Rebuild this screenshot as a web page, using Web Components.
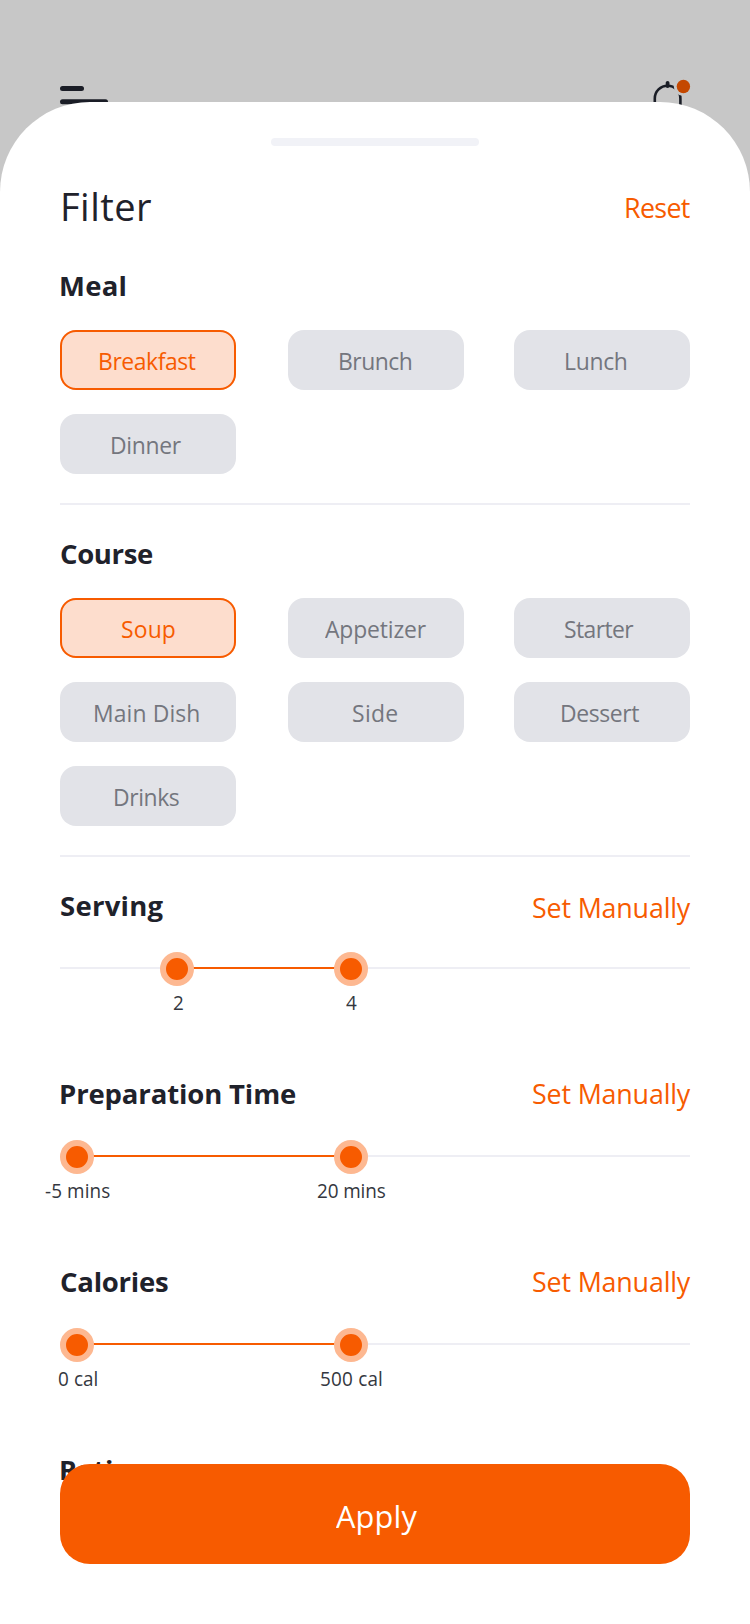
<!DOCTYPE html>
<html lang="en">
<head>
<meta charset="utf-8">
<title>Filter</title>
<style>
html,body{margin:0;padding:0}
body{font-family:"Open Sans","Noto Sans",sans-serif;color:#1f222b;background:#c7c7c7;width:750px;height:1624px;overflow:hidden}
</style>
</head>
<body>
<filter-screen></filter-screen>
<script>
const define = (name, html, setup) => {
  const t = document.createElement('template');
  t.innerHTML = html;
  customElements.define(name, class extends HTMLElement {
    connectedCallback() {
      if (this.shadowRoot) return;
      this.attachShadow({ mode: 'open' }).append(t.content.cloneNode(true));
      if (setup) setup(this, this.shadowRoot);
    }
  });
};

// A one-line label whose box is exactly as wide as its ink; "w" is that width.
// Regular weights are condensed a little, bold ones keep their shape.
const ctx = document.createElement('canvas').getContext('2d');
define('fit-text', `<style>:host{display:inline-block;white-space:nowrap}span{display:block;transform-origin:0 0}</style><span><slot></slot></span>`, (el, root) => {
  const w = parseFloat(el.getAttribute('w'));
  const text = el.textContent, cs = getComputedStyle(el);
  const sx = +cs.fontWeight >= 600 ? 1 : 0.975;
  ctx.font = `${cs.fontWeight} ${cs.fontSize} ${cs.fontFamily}`;
  const m = ctx.measureText(text);
  const ink = m.actualBoundingBoxRight + m.actualBoundingBoxLeft;
  const ls = text.length > 1 ? (w / sx - ink) / (text.length - 1) : 0;
  const span = root.querySelector('span');
  span.style.letterSpacing = ls + 'px';
  span.style.transform = `translateX(${m.actualBoundingBoxLeft * sx}px) scaleX(${sx})`;
  el.style.width = w + 'px';
});

define('app-backdrop', `<style>
:host{display:flex;justify-content:space-between;box-sizing:border-box;height:102px;padding:78px 58px 0 60px}
svg{display:block;overflow:visible}
</style>
<svg width="50" height="36" fill="#1a1d26"><rect y="8" width="24" height="5" rx="2.5"/><rect y="21.2" width="48" height="5" rx="2.5"/></svg>
<svg width="40" height="40" viewBox="652 78 40 40"><path d="M654.8 108V98.5A12.8 12.8 0 0 1 680.4 98.5V108" fill="none" stroke="#1a1d26" stroke-width="2.6"/><path d="M667.6 82.8V86" stroke="#1a1d26" stroke-width="3.8" stroke-linecap="round"/><circle cx="683.4" cy="86.5" r="9.6" fill="#c7c7c7"/><circle cx="683.4" cy="86.5" r="6.7" fill="#c44800"/></svg>`);

define('filter-chip', `<style>
:host{display:flex;justify-content:center;box-sizing:border-box;width:176px;height:60px;border-radius:16px;background:#e2e3e8;color:#74767e;font-size:23.5px;line-height:60px;padding:1px 0 0 1px}
:host([selected]){background:#fdddcd;color:#f75b00;box-shadow:inset 0 0 0 2px #f75b00}
</style><slot></slot>`, el => {
  el.style.paddingRight = (el.getAttribute('shift') || 0) * 2 + 'px';
});

define('filter-group', `<style>
:host{display:block;margin-bottom:28px;border-bottom:2px solid #eeeef4;padding-bottom:29px}
.t{height:39px;padding-top:1px;line-height:40px;font-size:27.5px;font-weight:700;margin-bottom:25px;padding-left:1px}
.g{display:grid;grid-template-columns:176px 176px 176px;column-gap:52px;row-gap:24px;width:630px}
::slotted(filter-chip:nth-of-type(3n)){margin-left:-2px}
</style><div class="t"><slot name="title"></slot></div><div class="g"><slot></slot></div>`);

define('range-knob', `<style>
:host{position:absolute;top:0;width:34px;height:64px;display:flex;flex-direction:column;align-items:center;font-size:19.4px;line-height:28px;color:#343740}
i{flex:none;box-sizing:border-box;width:34px;height:34px;border-radius:50%;border:6px solid #fdb891;background:#f75b00;margin-bottom:3px}
div{flex:none;padding-left:1px}
</style><i></i><div><slot></slot></div>`, el => { el.style.left = el.getAttribute('at') + 'px'; });

define('range-filter', `<style>
:host{display:block;height:188px}
.h{display:flex;justify-content:space-between;height:39px;padding-top:1px;line-height:40px;font-size:27.5px;margin-bottom:27px}
.h b{display:block;padding-left:1px}
.a{color:#f75b00;padding-top:var(--action-drop,0px)}
.s{position:relative;height:64px}
.track{display:flex;padding-top:15px}
.track i{display:block;height:2px;background:#eeeef4;flex:1}
.track .pre{flex:none}
.track .on{flex:none;background:#f75b00}
</style>
<div class="h"><b><slot name="title"></slot></b><span class="a"><slot name="action"></slot></span></div>
<div class="s"><div class="track"><i class="pre"></i><i class="on"></i><i></i></div><slot></slot></div>`, (el, root) => {
  const k = [...el.querySelectorAll('range-knob')].map(n => +n.getAttribute('at') + 17);
  if (k.length < 2) { root.querySelector('.s').remove(); return; }
  root.querySelector('.pre').style.width = k[0] + 'px';
  root.querySelector('.on').style.width = k[1] - k[0] + 'px';
});

define('apply-button', `<style>
:host{position:absolute;left:60px;right:60px;bottom:60px;height:100px;display:flex;justify-content:center;box-sizing:border-box;padding:2px 0 0 2px;line-height:100px;border-radius:30px;background:#f75b00;color:#fff;font-size:31.5px}
</style><slot></slot>`);

define('filter-sheet', `<style>
:host{display:block;position:relative;box-sizing:border-box;height:1522px;background:#fff;border-radius:90px 90px 0 0;padding:36px 60px 0}
.grip{width:208px;height:8px;border-radius:4px;background:#f1f2f7;margin:0 auto 31px}
.head{display:flex;justify-content:space-between;height:56px;margin-bottom:32px;padding-left:3px}
.title{font-size:39px;line-height:56px;padding-top:1px}
.reset{font-size:27.5px;line-height:40px;padding-top:11px;color:#f75b00}
</style>
<div class="grip"></div>
<div class="head"><span class="title"><slot name="title"></slot></span><span class="reset"><slot name="reset"></slot></span></div>
<slot></slot>`);

define('filter-screen', `<style>
:host{display:block;position:relative;height:1624px;overflow:hidden}
</style>
<app-backdrop></app-backdrop>
<filter-sheet>
  <fit-text slot="title" w="88.5">Filter</fit-text><fit-text slot="reset" w="64.5">Reset</fit-text>
  <filter-group><fit-text slot="title" w="64.5">Meal</fit-text>
    <filter-chip selected shift="1"><fit-text w="95.5">Breakfast</fit-text></filter-chip>
    <filter-chip shift="1"><fit-text w="71.5">Brunch</fit-text></filter-chip>
    <filter-chip shift="6"><fit-text w="60.5">Lunch</fit-text></filter-chip>
    <filter-chip shift="2"><fit-text w="69.5">Dinner</fit-text></filter-chip>
  </filter-group>
  <filter-group><fit-text slot="title" w="92">Course</fit-text>
    <filter-chip selected><fit-text w="53.5">Soup</fit-text></filter-chip>
    <filter-chip shift="1"><fit-text w="101.5">Appetizer</fit-text></filter-chip>
    <filter-chip shift="3"><fit-text w="69">Starter</fit-text></filter-chip>
    <filter-chip shift="2"><fit-text w="104">Main Dish</fit-text></filter-chip>
    <filter-chip shift="2"><fit-text w="44">Side</fit-text></filter-chip>
    <filter-chip shift="2"><fit-text w="77">Dessert</fit-text></filter-chip>
    <filter-chip shift="1.5"><fit-text w="64.5">Drinks</fit-text></filter-chip>
  </filter-group>
  <range-filter style="--action-drop:2px"><fit-text slot="title" w="102.5">Serving</fit-text><fit-text slot="action" w="157.5">Set Manually</fit-text>
    <range-knob at="100"><fit-text w="9.5">2</fit-text></range-knob><range-knob at="274"><fit-text w="10.5">4</fit-text></range-knob>
  </range-filter>
  <range-filter><fit-text slot="title" w="235">Preparation Time</fit-text><fit-text slot="action" w="157.5">Set Manually</fit-text>
    <range-knob at="0"><fit-text w="65">-5 mins</fit-text></range-knob><range-knob at="274"><fit-text w="68.5">20 mins</fit-text></range-knob>
  </range-filter>
  <range-filter><fit-text slot="title" w="107">Calories</fit-text><fit-text slot="action" w="157.5">Set Manually</fit-text>
    <range-knob at="0"><fit-text w="39.5">0 cal</fit-text></range-knob><range-knob at="274"><fit-text w="61">500 cal</fit-text></range-knob>
  </range-filter>
  <range-filter><fit-text slot="title" w="86">Rating</fit-text></range-filter>
</filter-sheet>
<apply-button><fit-text w="81">Apply</fit-text></apply-button>`);
</script>
</body>
</html>
